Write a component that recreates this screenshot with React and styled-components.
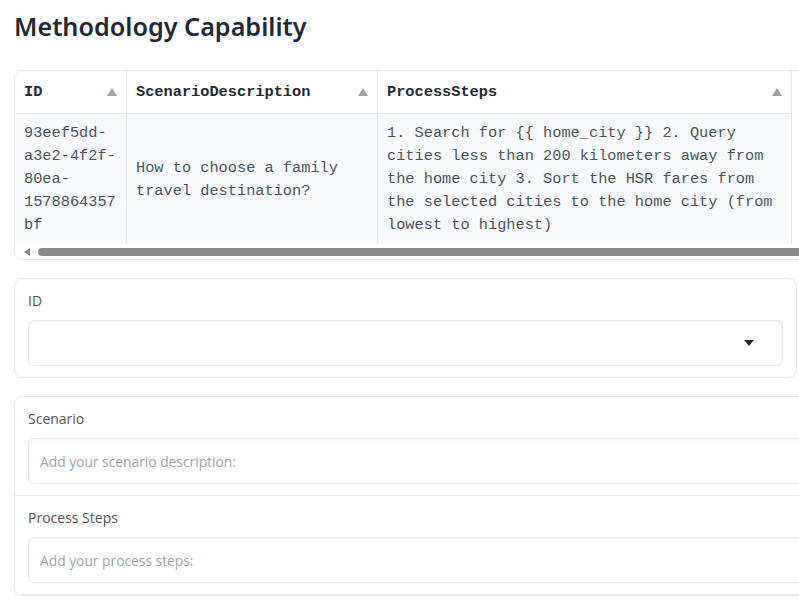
import styled, { createGlobalStyle } from 'styled-components';

const GlobalStyle = createGlobalStyle`
  html, body {
    margin: 0;
    overflow: hidden;
    background: #ffffff;
  }
  body {
    font-family: 'Open Sans', 'Noto Sans', sans-serif;
  }
`;

const Page = styled.div`
  width: 1000px;
  padding: 0 14px;
  display: flex;
  flex-direction: column;
  align-items: flex-start;
`;

const Title = styled.h1`
  margin: 0;
  height: 70px;
  padding-top: 8px;
  box-sizing: border-box;
  font-family: 'Noto Sans', sans-serif;
  font-weight: 600;
  font-size: 25.2px;
  line-height: 36px;
  color: #1f2937;
`;

const TableFrame = styled.div`
  width: 900px;
  border: 1px solid #e5e7eb;
  border-radius: 8px;
  overflow: hidden;
  display: flex;
  flex-direction: column;
`;

const Grid = styled.div`
  display: grid;
  grid-template-columns: 111px 251px 414px;
  width: 776px;
  border-right: 1px solid #e5e7eb;
  font-family: 'Liberation Mono', 'Courier New', monospace;
  font-size: 15.3px;
  line-height: 23px;
`;

const HeadCell = styled.div`
  height: 43px;
  display: flex;
  align-items: center;
  justify-content: space-between;
  padding: 0 9px;
  border-bottom: 1px solid #e5e7eb;
  border-left: ${p => (p.$first ? 'none' : '1px solid #e5e7eb')};
  font-weight: 700;
  color: #1f2937;
  box-sizing: border-box;
  background: #ffffff;
`;

const SortArrow = styled.span`
  width: 0;
  height: 0;
  border-left: 5px solid transparent;
  border-right: 5px solid transparent;
  border-bottom: 8px solid #9ca3af;
`;

const BodyCell = styled.div`
  height: 130px;
  display: flex;
  align-items: center;
  padding: 1px 9px 0;
  background: #f9fafb;
  border-left: ${p => (p.$first ? 'none' : '1px solid #e5e7eb')};
  color: #4b5563;
  box-sizing: border-box;
  overflow-wrap: anywhere;
`;

const ScrollBar = styled.div`
  height: 15px;
  display: flex;
  align-items: center;
  gap: 8px;
  padding-left: 9px;
`;

const ScrollArrow = styled.span`
  width: 0;
  height: 0;
  border-top: 4px solid transparent;
  border-bottom: 4px solid transparent;
  border-right: 6px solid #8a8a8a;
`;

const ScrollThumb = styled.div`
  flex: 1;
  height: 8px;
  border-radius: 4px;
  background: #8a8a8a;
`;

const Card = styled.div`
  width: ${p => p.$width};
  margin-top: 18px;
  border: 1px solid #e5e7eb;
  border-radius: 8px;
  box-sizing: border-box;
  display: flex;
  flex-direction: column;
`;

const Field = styled.div`
  padding: 12px 13px 11px;
  display: flex;
  flex-direction: column;
  gap: 9px;
  border-bottom: ${p => (p.$divider ? '1px solid #e5e7eb' : 'none')};
`;

const Label = styled.span`
  font-size: 14px;
  line-height: 20px;
  color: #555555;
`;

const InputBox = styled.div`
  height: 46px;
  border: 1px solid #e5e7eb;
  border-radius: 6px;
  box-sizing: border-box;
  box-shadow: inset 0 1px 3px rgba(0, 0, 0, 0.05);
  display: flex;
  align-items: center;
  justify-content: space-between;
  padding: 0 28px 0 11px;
  font-size: 13.8px;
  color: #9ca3af;
  background: #ffffff;
`;

const Caret = styled.span`
  width: 0;
  height: 0;
  border-left: 5px solid transparent;
  border-right: 5px solid transparent;
  border-top: 6px solid #1f2937;
`;

const columns = ['ID', 'ScenarioDescription', 'ProcessSteps'];

const row = [
  '93eef5dd-a3e2-4f2f-80ea-1578864357bf',
  'How to choose a family travel destination?',
  '1. Search for {{ home_city }} 2. Query cities less than 200 kilometers away from the home city 3. Sort the HSR fares from the selected cities to the home city (from lowest to highest)',
];

export default function App() {
  return (
    <>
      <GlobalStyle />
      <Page>
        <Title>Methodology Capability</Title>
        <TableFrame>
          <Grid>
            {columns.map((c, i) => (
              <HeadCell key={c} $first={i === 0}>
                {c}
                <SortArrow />
              </HeadCell>
            ))}
            {row.map((v, i) => (
              <BodyCell key={i} $first={i === 0}>{v}</BodyCell>
            ))}
          </Grid>
          <ScrollBar>
            <ScrollArrow />
            <ScrollThumb />
          </ScrollBar>
        </TableFrame>
        <Card $width="783px">
          <Field>
            <Label>ID</Label>
            <InputBox>
              <span />
              <Caret />
            </InputBox>
          </Field>
        </Card>
        <Card $width="900px">
          <Field $divider>
            <Label>Scenario</Label>
            <InputBox>Add your scenario description:</InputBox>
          </Field>
          <Field $divider>
            <Label>Process Steps</Label>
            <InputBox>Add your process steps:</InputBox>
          </Field>
        </Card>
      </Page>
    </>
  );
}
